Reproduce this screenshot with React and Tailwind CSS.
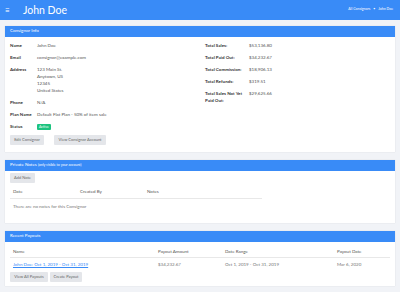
import React from 'react';

const font = { fontFamily: 'Lato, "Open Sans", sans-serif' };

const Row = ({ label, children, labelW }) => (
  <div className="flex mb-[5px] leading-[7px]">
    <div className={`${labelW} shrink-0 font-bold text-[#333]`}>{label}</div>
    <div className="text-[#555]">{children}</div>
  </div>
);

const Btn = ({ children, w }) => (
  <button className={`h-[10px] ${w} bg-[#e4e6ea] rounded-[1px] text-[4px] text-[#666] flex items-center justify-center`}>
    {children}
  </button>
);

const Card = ({ title, children, className = '' }) => (
  <div className={`mx-[5px] bg-white shadow-[0_0_1px_rgba(0,0,0,0.15)] ${className}`}>
    <div className="h-[11px] bg-[#398bf7] text-white text-[4.5px] flex items-center px-[5px]">{title}</div>
    {children}
  </div>
);

export default function App() {
  return (
    <div className="w-[400px] h-[292px] overflow-hidden bg-[#f1f3f7] text-[4.5px]" style={font}>
      {/* header */}
      <div className="h-[20px] bg-[#398bf7] flex items-center px-[5px] text-white">
        <span className="text-[8px] w-[18px] leading-none">≡</span>
        <span className="text-[10.5px] font-normal leading-none">John Doe</span>
        <div className="ml-auto flex items-center gap-[3px] text-[3.5px] pr-[2px]">
          <span>All Consignors</span>
          <span>•</span>
          <span>John Doe</span>
        </div>
      </div>

      {/* consignor info */}
      <Card title="Consignor Info" className="mt-[6px]">
        <div className="px-[5px] pt-[5px] pb-[7px] grid grid-cols-2 gap-x-[10px]">
          <div>
            <Row label="Name" labelW="w-[27px]">John Doe</Row>
            <Row label="Email" labelW="w-[27px]">consignor@example.com</Row>
            <Row label="Address" labelW="w-[27px]">
              <div>123 Main St.</div>
              <div>Anytown, US</div>
              <div>12345</div>
              <div>United States</div>
            </Row>
            <Row label="Phone" labelW="w-[27px]">N/A</Row>
            <Row label="Plan Name" labelW="w-[27px]">Default Flat Plan - 50% of item sale</Row>
            <Row label="Status" labelW="w-[27px]">
              <span className="inline-block bg-[#1cc37f] text-white text-[3.5px] leading-[6px] px-[2px] rounded-[1px]">Active</span>
            </Row>
            <div className="flex gap-[10px]">
              <Btn w="w-[34px]">Edit Consignor</Btn>
              <Btn w="w-[52px]">View Consignor Account</Btn>
            </div>
          </div>
          <div>
            <Row label="Total Sales:" labelW="w-[44px]">$53,136.80</Row>
            <Row label="Total Paid Out:" labelW="w-[44px]">$34,232.67</Row>
            <Row label="Total Commission:" labelW="w-[44px]">$18,906.13</Row>
            <Row label="Total Refunds:" labelW="w-[44px]">$319.51</Row>
            <Row label={<span>Total Sales Not Yet<br />Paid Out:</span>} labelW="w-[44px]">$29,625.66</Row>
          </div>
        </div>
      </Card>

      {/* private notes */}
      <Card
        title={<span>Private Notes <span className="text-[3.5px]">(only visible to your account)</span></span>}
        className="mt-[8px]"
      >
        <div className="px-[5px] pt-[2px] pb-[8px]">
          <Btn w="w-[25px]">Add Note</Btn>
          <div className="w-[252px] mt-[4px] text-[#555]">
            <div className="flex h-[12px] items-center border-b border-[#e8e8e8] px-[3px]">
              <span className="w-[67px]">Date</span>
              <span className="w-[67px]">Created By</span>
              <span>Notes</span>
            </div>
            <div className="h-[16px] flex items-center px-[3px] text-[#777]">There are no notes for this Consignor</div>
          </div>
        </div>
      </Card>

      {/* recent payouts */}
      <Card title="Recent Payouts" className="mt-[8px]">
        <div className="px-[5px] pt-[5px] pb-[4px] text-[#555]">
          <div className="flex h-[11px] items-center border-b border-[#e8e8e8] px-[3px]">
            <span className="w-[145px]">Name</span>
            <span className="w-[67px]">Payout Amount</span>
            <span className="w-[112px]">Date Range</span>
            <span>Payout Date</span>
          </div>
          <div className="flex h-[14px] items-center px-[3px] text-[#777]">
            <span className="w-[145px] text-[#398bf7] underline">John Doe: Oct 1, 2019 - Oct 31, 2019</span>
            <span className="w-[67px]">$34,232.67</span>
            <span className="w-[112px]">Oct 1, 2019 - Oct 31, 2019</span>
            <span>Mar 6, 2020</span>
          </div>
          <div className="flex gap-[2px]">
            <Btn w="w-[38px]">View All Payouts</Btn>
            <Btn w="w-[32px]">Create Payout</Btn>
          </div>
        </div>
      </Card>

      <Card title="" className="mt-[8px]">
        <div className="h-[20px]" />
      </Card>
    </div>
  );
}
